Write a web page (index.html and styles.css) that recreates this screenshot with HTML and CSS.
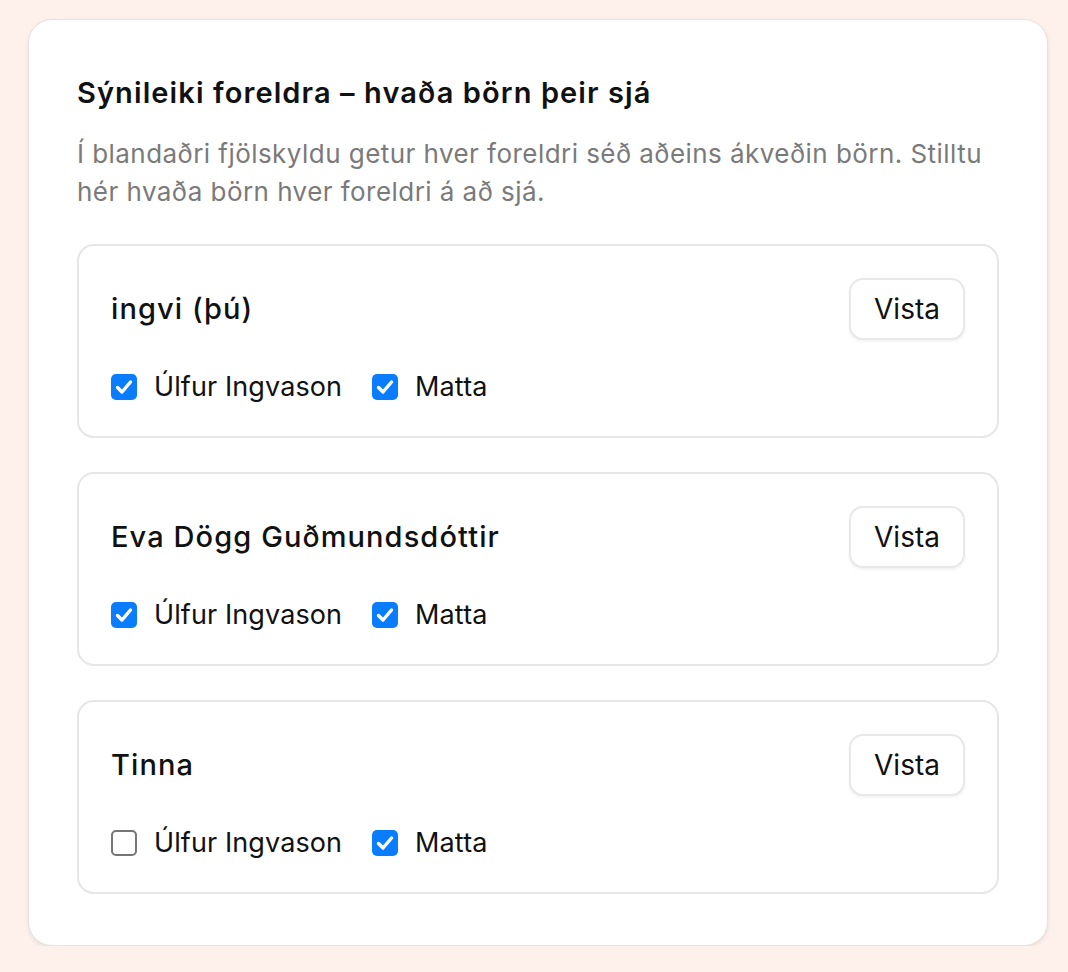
FILE: index.html
```html
<!DOCTYPE html>
<html lang="is">
<head>
<meta charset="utf-8">
<link rel="stylesheet" href="styles.css">
</head>
<body>
<section class="panel">
  <h2 class="title">Sýnileiki foreldra – hvaða börn þeir sjá</h2>
  <p class="desc">Í blandaðri fjölskyldu getur hver foreldri séð aðeins ákveðin börn. Stilltu hér hvaða börn hver foreldri á að sjá.</p>
  <div class="list">
    <div class="parent">
      <div class="head">
        <span class="name">ingvi (þú)</span>
        <button class="btn">Vista</button>
      </div>
      <div class="kids">
        <label class="kid"><input type="checkbox" checked><span>Úlfur Ingvason</span></label>
        <label class="kid"><input type="checkbox" checked><span>Matta</span></label>
      </div>
    </div>
    <div class="parent">
      <div class="head">
        <span class="name">Eva Dögg Guðmundsdóttir</span>
        <button class="btn">Vista</button>
      </div>
      <div class="kids">
        <label class="kid"><input type="checkbox" checked><span>Úlfur Ingvason</span></label>
        <label class="kid"><input type="checkbox" checked><span>Matta</span></label>
      </div>
    </div>
    <div class="parent">
      <div class="head">
        <span class="name">Tinna</span>
        <button class="btn">Vista</button>
      </div>
      <div class="kids">
        <label class="kid"><input type="checkbox"><span>Úlfur Ingvason</span></label>
        <label class="kid"><input type="checkbox" checked><span>Matta</span></label>
      </div>
    </div>
  </div>
</section>
</body>
</html>
```
FILE: styles.css
```css
html, body {
  margin: 0;
  background: #fef1ec;
}
body {
  padding: 19px 20px 0 28px;
  font-family: Inter, "Noto Sans", sans-serif;
  color: #111;
}
.panel {
  width: 1020px;
  box-sizing: border-box;
  background: #fff;
  border: 1px solid #e6e2e0;
  border-radius: 24px;
  box-shadow: 0 2px 4px rgba(0,0,0,0.08);
  padding: 57px 48px 51px 48px;
}
.title {
  margin: 0;
  font-size: 29px;
  line-height: 32px;
  font-weight: 600;
  letter-spacing: 1.1px;
}
.desc {
  margin: 26px -2px 0 0;
  font-size: 26px;
  line-height: 38px;
  letter-spacing: 0.45px;
  color: #7a7a7a;
}
.list {
  margin-top: 33px;
  display: flex;
  flex-direction: column;
  gap: 34px;
}
.parent {
  border: 2px solid #e6e6e6;
  border-radius: 17px;
  padding: 32px 32px 33px 32px;
}
.head {
  display: flex;
  align-items: center;
  justify-content: space-between;
}
.name {
  font-size: 29px;
  font-weight: 500;
  line-height: 36px;
  letter-spacing: 1.1px;
}
.btn {
  font-family: inherit;
  font-size: 28px;
  color: #111;
  background: #fff;
  border: 2px solid #e8e8e8;
  border-radius: 14px;
  height: 62px;
  width: 116px;
  padding: 0;
  box-shadow: 0 2px 3px rgba(0,0,0,0.05);
}
.kids {
  margin-top: 31px;
  display: flex;
  gap: 30px;
  line-height: 32px;
}
.kid {
  display: flex;
  align-items: center;
  gap: 17px;
  font-size: 27px;
  letter-spacing: 0.1px;
}
.kid input {
  appearance: none;
  -webkit-appearance: none;
  margin: 0;
  width: 26px;
  height: 26px;
  box-sizing: border-box;
  border: 2px solid #767676;
  border-radius: 5px;
  background: #fff;
}
.kid input:checked {
  border: none;
  background: #0a7cff url("data:image/svg+xml,%3Csvg xmlns='http://www.w3.org/2000/svg' viewBox='0 0 26 26'%3E%3Cpath d='M6.5 13.5l4.5 4.5 8.5-10' fill='none' stroke='white' stroke-width='3.4' stroke-linecap='round' stroke-linejoin='round'/%3E%3C/svg%3E") center/100% no-repeat;
}
```
